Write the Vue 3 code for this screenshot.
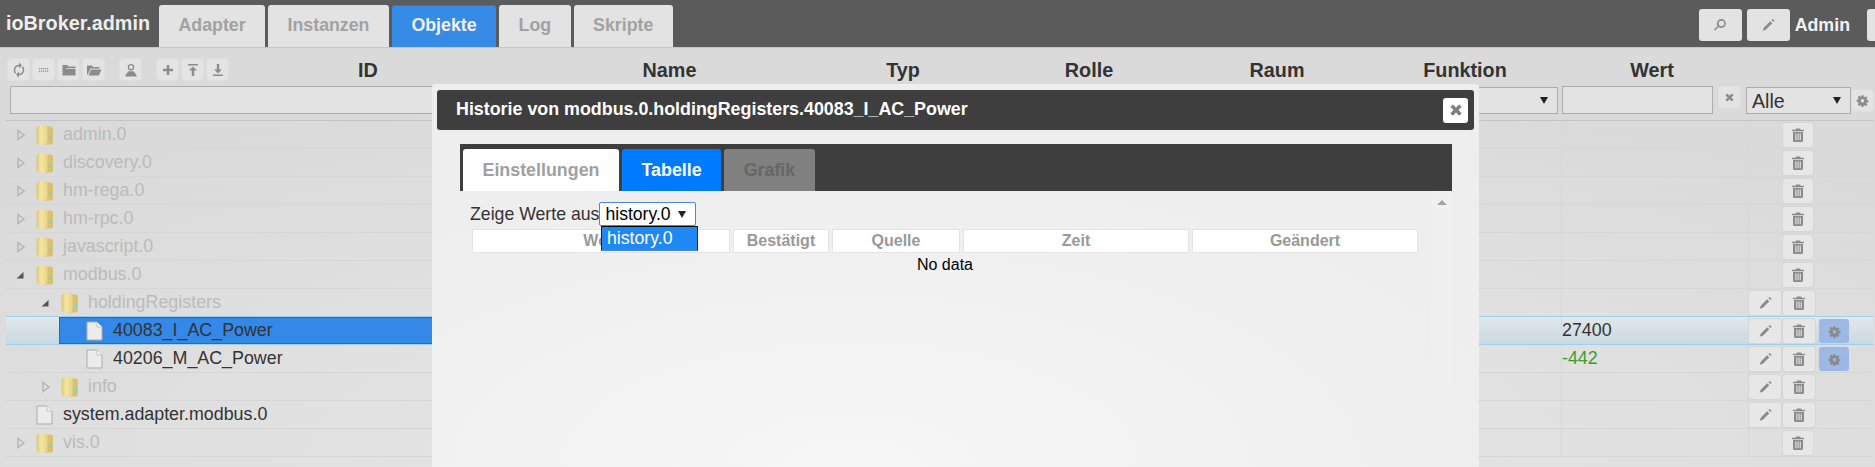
<template>
  <div class="page">
    <div class="topbar">
      <span class="brand">ioBroker.admin</span>
      <div class="tabs">
        <div v-for="t in mainTabs" :key="t" class="tab" :class="{ active: t === 'Objekte' }">{{ t }}</div>
      </div>
      <div class="topright">
        <button class="topbtn"><svg viewBox="0 0 16 16"><path :d="icons.search" /></svg></button>
        <button class="topbtn"><svg viewBox="0 0 16 16"><path :d="icons.pencil" /></svg></button>
        <span class="admin">Admin</span>
        <button class="topbtn last"></button>
      </div>
    </div>

    <div class="content">
      <div class="headrow">
        <div class="tools">
          <button v-for="b in toolButtons" :key="b" class="tool" :class="b">
            <svg viewBox="0 0 16 16"><path :d="icons[b]" fill-rule="evenodd" /></svg>
          </button>
        </div>
        <div v-for="c in columns" :key="c" class="colname">{{ c }}</div>
      </div>

      <div class="filters">
        <input class="filter grow" type="text">
        <select class="filter fn"><option></option></select>
        <input class="filter val" type="text">
        <button class="tool clear"><svg viewBox="0 0 16 16"><path :d="icons.close" /></svg></button>
        <select class="filter ack"><option>Alle</option></select>
        <button class="tool gear"><svg viewBox="0 0 16 16"><path :d="icons.gear" fill-rule="evenodd" /></svg></button>
      </div>

      <div class="rows">
        <div v-for="r in rows" :key="r.name" class="row" :class="{ selected: r.selected }">
          <div class="namecell">
            <span class="indent" :style="{ width: 3 + r.level * 25 + 'px' }"></span>
            <div class="nameinner">
              <span class="arrow">
                <svg v-if="r.open === false" viewBox="0 0 10 12"><path d="M3 1.500 L9 6 L3 10.500 Z" fill="none" stroke="#b4b4b4" stroke-width="1.400" /></svg>
                <svg v-else-if="r.open" viewBox="0 0 10 12"><path d="M8.500 3 V9.500 H1.500 Z" fill="#555" /></svg>
              </span>
              <svg v-if="r.folder" class="nodeicon" viewBox="0 0 17 20">
                <defs>
                  <linearGradient id="fold" x1="0" x2="1" y1="0" y2="0">
                    <stop offset="0" stop-color="#dcc676" />
                    <stop offset="0.4" stop-color="#f3e6a4" />
                    <stop offset="1" stop-color="#e8d585" />
                  </linearGradient>
                </defs>
                <rect x="6" y="1.500" width="11" height="18" rx="2.500" fill="#d8c26f" />
                <rect x="13" y="11" width="2.500" height="3.500" fill="#93cbc6" />
                <rect x="0.500" y="0.500" width="11" height="19" rx="3" fill="url(#fold)" />
              </svg>
              <svg v-else class="nodeicon" viewBox="0 0 17 20">
                <path d="M1 1 H11 L16 6 V19 H1 Z" fill="#ececec" stroke="#adadad" />
                <path d="M11 1 V6 H16" fill="#f6f6f6" stroke="#c4c4c4" />
              </svg>
              <span class="label" :class="{ faded: r.folder }">{{ r.name }}</span>
            </div>
          </div>
          <div></div>
          <div class="valcell" :class="{ neg: r.value < 0 }">{{ r.value }}</div>
          <div class="actions">
            <button v-if="r.edit" class="act"><svg viewBox="0 0 16 16"><path :d="icons.pencil" /></svg></button>
            <button class="act" :class="{ solo: !r.edit }"><svg viewBox="0 0 16 16"><path :d="icons.trash" fill-rule="evenodd" /></svg></button>
            <button v-if="r.history" class="act hist"><svg viewBox="0 0 16 16"><path :d="icons.gear" fill-rule="evenodd" /></svg></button>
          </div>
        </div>
      </div>
    </div>

    <div class="modal">
      <div class="modaltitle">
        <span class="titletext">Historie von modbus.0.holdingRegisters.40083_I_AC_Power</span>
        <button class="closebtn"><svg viewBox="0 0 16 16"><path :d="icons.close" /></svg></button>
      </div>
      <div class="modaltabs">
        <div class="mtab first">Einstellungen</div>
        <div class="mtab current">Tabelle</div>
        <div class="mtab off">Grafik</div>
      </div>
      <div class="pane">
        <div class="paneinner">
          <div class="source">
            <span>Zeige Werte aus</span>
            <select class="instance"><option>history.0</option></select>
            <div class="dropdown">history.0</div>
          </div>
          <div class="thead">
            <div v-for="h in historyCols" :key="h" class="th">{{ h }}</div>
          </div>
          <div class="nodata">No data</div>
        </div>
        <div class="scroll"><span class="scrollup"></span></div>
      </div>
    </div>
  </div>
</template>

<script setup>
const mainTabs = ['Adapter', 'Instanzen', 'Objekte', 'Log', 'Skripte']
const columns = ['ID', 'Name', 'Typ', 'Rolle', 'Raum', 'Funktion', 'Wert']
const historyCols = ['Wert', 'Bestätigt', 'Quelle', 'Zeit', 'Geändert']
const toolButtons = ['refresh', 'dots', 'folder', 'folderOpen', 'person', 'plus', 'upload', 'download']

const rows = [
  { name: 'admin.0', level: 0, folder: true, open: false },
  { name: 'discovery.0', level: 0, folder: true, open: false },
  { name: 'hm-rega.0', level: 0, folder: true, open: false },
  { name: 'hm-rpc.0', level: 0, folder: true, open: false },
  { name: 'javascript.0', level: 0, folder: true, open: false },
  { name: 'modbus.0', level: 0, folder: true, open: true },
  { name: 'holdingRegisters', level: 1, folder: true, open: true, edit: true },
  { name: '40083_I_AC_Power', level: 2, value: 27400, edit: true, history: true, selected: true },
  { name: '40206_M_AC_Power', level: 2, value: -442, edit: true, history: true },
  { name: 'info', level: 1, folder: true, open: false, edit: true },
  { name: 'system.adapter.modbus.0', level: 0, edit: true },
  { name: 'vis.0', level: 0, folder: true, open: false }
]

const icons = {
  search: 'M9.500 2a4.500 4.500 0 1 1-3 7.900L3.200 13.600 2 12.400l3.600-3.400A4.500 4.500 0 0 1 9.500 2zm0 1.700a2.800 2.800 0 1 0 0 5.600 2.800 2.800 0 0 0 0-5.600z',
  pencil: 'M10.200 4.200L12.300 6.300 5.800 12.800 2.700 13.800 3.700 10.700zM11.400 3L12.700 1.900 14.600 3.800 13.500 5.100z',
  close: 'M3 5.200L5.200 3 8 5.800 10.800 3 13 5.200 10.200 8 13 10.800 10.800 13 8 10.200 5.200 13 3 10.800 5.800 8 3 5.200z',
  gear: 'M6.800 1.500h2.400l.3 1.900 1.200.5 1.600-1.100 1.700 1.700-1.100 1.600.5 1.200 1.900.3v2.400l-1.900.3-.5 1.200 1.100 1.600-1.700 1.700-1.600-1.100-1.200.5-.3 1.900H6.800l-.3-1.900-1.200-.5-1.600 1.100L2 12.600l1.100-1.600-.5-1.200-1.900-.3V7.100l1.900-.3.5-1.200L2 4l1.700-1.700 1.600 1.100 1.200-.5zM8 6.200a2.200 2.200 0 1 0 0 4.400 2.200 2.200 0 0 0 0-4.400z',
  trash: 'M6 1.500h4l.6 1.300H14v1.400H2V2.800h3.400zM3 5h10v8.500c0 .8-.6 1.500-1.500 1.500h-7C3.600 15 3 14.300 3 13.500zM5.300 6.500v6.800h1.100V6.500zM7.500 6.500v6.800h1.100V6.500zM9.700 6.500v6.800h1.100V6.500z',
  refresh: 'M8 2.800V.6L11 3.400 8 6.200V4.200A3.800 3.800 0 0 0 5.200 10.600L4.200 11.700A5.300 5.300 0 0 1 8 2.800zM11.800 4.300A5.300 5.300 0 0 1 8 13.200v2.200L5 12.600 8 9.800V11.800A3.800 3.800 0 0 0 10.800 5.400z',
  dots: 'M3 6h1.200v1.200H3zM5 6h1.200v1.200H5zM7 6h1.200v1.200H7zM9 6h1.200v1.200H9zM11 6h1.200v1.200H11zM3 8.500h1.200v1.200H3zM5 8.500h1.200v1.200H5zM7 8.500h1.200v1.200H7zM9 8.500h1.200v1.200H9zM11 8.500h1.200v1.200H11z',
  folder: 'M1.500 3h5l1 1.500h7V6h-9.500v.8h9.500V13.500h-13z',
  folderOpen: 'M1 3.500h5l1 1.500h6.500v1.500H4.500L1.800 12.500H1zM5 7.500h10.500L12.800 13.500H2.500z',
  person: 'M8 2a3.200 3.200 0 1 1 0 6.400A3.200 3.200 0 0 1 8 2zm0 1.300a1.900 1.900 0 1 0 0 3.800 1.900 1.900 0 0 0 0-3.800zM5.500 9.200h5L13.500 13v1.500h-11V13z',
  plus: 'M6.800 3h2.400v3.800H13v2.400H9.200V13H6.800V9.200H3V6.800h3.800z',
  upload: 'M3 2h10v1.400H3zM8 4.500l4 4H9.200V14H6.800V8.500H4z',
  download: 'M6.800 2h2.400v5.500H12l-4 4-4-4h2.800zM3 12.600h10V14H3z'
}
</script>

<style scoped>
.page {
  position: relative;
  width: 1875px;
  height: 467px;
  overflow: hidden;
  font-family: "Liberation Sans", Arial, sans-serif;
  background: radial-gradient(ellipse 1300px 400px at 50% 100%, #e8e8e8, #dadada);
}

button {
  border: 0;
  padding: 0;
  display: flex;
  align-items: center;
  justify-content: center;
}

svg {
  display: block;
}

.topbar {
  height: 47px;
  display: flex;
  background: #5b5b5b;
  border-bottom: 1px solid #c6c6c6;
}

.brand {
  width: 153px;
  padding-left: 6px;
  font-size: 19.8px;
  font-weight: bold;
  line-height: 47px;
  color: #eeeeee;
}

.tabs {
  display: flex;
  gap: 3px;
  padding-top: 5px;
}

.tab {
  padding: 0 19.5px;
  font-size: 17.75px;
  font-weight: bold;
  line-height: 41px;
  color: #a2a2a2;
  background: #e3e3e3;
  border-radius: 3px 3px 0 0;
}

.tab.active {
  color: #f2f2f2;
  background: #368be6;
  box-shadow: inset 0 1px 0 #2f6fe0;
}

.topright {
  margin-left: auto;
  display: flex;
  gap: 5px;
  padding-top: 9px;
  margin-right: -35px;
}

.topbtn {
  width: 43px;
  height: 32px;
  background: #e3e3e3;
  border-radius: 3px;
}

.topbtn svg {
  width: 16px;
  height: 16px;
  fill: #8c8c8c;
}

.topbtn.last {
  margin-left: 12px;
}

.admin {
  font-size: 17.8px;
  font-weight: bold;
  line-height: 32px;
  color: #f2f2f2;
}

.content {
  padding: 0 2px 0 6px;
}

.headrow {
  display: grid;
  grid-template-columns: 222px 280px 323px 144px 228px 148px 228px 146px;
  height: 38px;
}

.tools {
  display: flex;
  gap: 4px;
  padding: 11px 0 0 2px;
}

.tool {
  width: 21px;
  height: 21px;
  background: #e4e4e4;
  border-radius: 3px;
  box-shadow: 0 0 0 1px #dedede;
}

.tool svg {
  width: 16px;
  height: 16px;
  fill: #8c8c8c;
}

.tool.person,
.tool.plus {
  margin-left: 12px;
}

.colname {
  font-size: 19.8px;
  font-weight: bold;
  line-height: 44px;
  text-align: center;
  color: #333333;
}

.filters {
  display: flex;
  height: 35px;
  padding: 0 0 7px 4px;
  border-bottom: 1px solid #c4c4c4;
  align-items: flex-start;
  box-sizing: border-box;
}

.filter {
  box-sizing: border-box;
  height: 28px;
  border: 1px solid #adadad;
  background-color: #e3e3e3;
  color: #333333;
  font-family: inherit;
  font-size: 19.6px;
}

select.filter,
.instance {
  appearance: none;
  padding: 0 0 0 5px;
  background-image: url("data:image/svg+xml,%3Csvg xmlns='http://www.w3.org/2000/svg' width='8' height='7'%3E%3Cpath d='M0 0H8L4 7Z' fill='%23222'/%3E%3C/svg%3E");
  background-repeat: no-repeat;
  background-position: right 9px center;
}

.grow {
  flex: 1;
}

.fn {
  width: 190px;
  margin-left: 3px;
  margin-top: 1px;
  height: 27px;
}

.val {
  width: 151px;
  margin-left: 4px;
}

.clear {
  margin: 1px 6px 0;
}

.clear svg,
.gear svg {
  width: 13px;
  height: 13px;
}

.ack {
  width: 105px;
  height: 27px;
  margin-top: 1px;
}

.gear {
  margin: 4px 0 0 1px;
}

.rows {
  display: flex;
  flex-direction: column;
}

.row {
  display: grid;
  grid-template-columns: 700px 1fr 187px 125px;
  height: 28px;
  box-sizing: border-box;
  border-bottom: 1px solid #d6d6d6;
}

.row.selected {
  background: linear-gradient(#e2e8eb, #c8d8e2);
  border-bottom-color: #9dd0ec;
  box-shadow: 0 -1px 0 #9dd0ec;
}

.namecell {
  display: flex;
  min-width: 0;
}

.nameinner {
  flex: 1;
  display: flex;
  align-items: center;
  padding-left: 6px;
}

.selected .nameinner {
  background: #3388e8;
  box-shadow: inset 0 0 0 1px #2a5fe8;
}

.arrow {
  width: 10px;
  height: 12px;
  margin-right: 11px;
}

.nodeicon {
  width: 17px;
  height: 20px;
  margin-right: 10px;
}

.label,
.valcell {
  font-size: 17.85px;
  color: #333333;
}

.label.faded {
  color: #bbbbbb;
}

.valcell {
  line-height: 27px;
  border-left: 1px solid #d8d8d8;
}

.valcell.neg {
  color: #3a9c2e;
}

.actions {
  display: flex;
  gap: 2px;
  padding-top: 2px;
  border-left: 1px solid #d8d8d8;
}

.act {
  width: 32px;
  height: 24px;
  background: #e7e7e7;
  border-radius: 3px;
  box-shadow: 0 0 0 1px #d6d6d6;
}

.act.solo {
  width: 30px;
  margin-left: 34px;
}

.act svg {
  width: 16px;
  height: 16px;
  fill: #8a8a8a;
}

.act.hist {
  width: 30px;
  margin-left: 2px;
  background: #9db8e4;
  box-shadow: none;
}

.act.hist svg {
  width: 13px;
  height: 13px;
}

.modal {
  position: absolute;
  left: 432px;
  top: 84px;
  bottom: 0;
  width: 1047px;
  padding: 6px 5px 0;
  box-sizing: border-box;
  border-radius: 3px 3px 0 0;
  background: radial-gradient(ellipse 700px 300px at 40% 100%, #f6f6f6, #eeeeee);
}

.modaltitle {
  height: 40px;
  padding: 0 6px 0 19px;
  display: flex;
  align-items: center;
  justify-content: space-between;
  background: #3e3e3e;
  border-radius: 3px;
  color: #ffffff;
  font-size: 17.85px;
  font-weight: bold;
}

.titletext {
  padding-bottom: 2px;
}

.closebtn {
  width: 25px;
  height: 25px;
  background: #ffffff;
  border-radius: 3px;
}

.closebtn svg {
  width: 18px;
  height: 18px;
  fill: #7e7e7e;
}

.modaltabs {
  margin: 14px 22px 0 23px;
  padding: 5px 0 0 3px;
  height: 47px;
  box-sizing: border-box;
  display: flex;
  gap: 3px;
  background: #3e3e3e;
}

.mtab {
  padding: 0 19.5px;
  font-size: 17.85px;
  font-weight: bold;
  line-height: 42px;
  border-radius: 3px 3px 0 0;
}

.mtab.first {
  color: #a0a0a0;
  background: #ffffff;
}

.mtab.current {
  color: #ffffff;
  background: #007bff;
}

.mtab.off {
  color: #666666;
  background: #808080;
}

.pane {
  margin: 0 22px 0 23px;
  display: flex;
  justify-content: space-between;
}

.paneinner {
  width: 971px;
}

.source {
  position: relative;
  display: flex;
  align-items: center;
  height: 24px;
  margin: 11px 0 3px 10px;
  font-size: 17.7px;
  color: #333333;
}

.instance {
  width: 97px;
  height: 24px;
  margin-left: 0;
  box-sizing: border-box;
  border: 1px solid #4a86e0;
  border-radius: 2px;
  background-color: #ffffff;
  color: #000000;
  font-family: inherit;
  font-size: 17.6px;
}

.dropdown {
  position: absolute;
  left: 131px;
  top: 24px;
  width: 97px;
  height: 25px;
  box-sizing: border-box;
  padding-left: 5px;
  line-height: 22px;
  color: #ffffff;
  background: #1e88f5;
  border: 1px solid #222222;
  border-top-color: #000000;
  border-bottom-color: #4a86e0;
  z-index: 2;
}

.thead {
  display: grid;
  grid-template-columns: 258px 96px 128px 226px 226px;
  gap: 3px;
  margin-left: 12px;
}

.th {
  height: 24px;
  box-sizing: border-box;
  border: 1px solid #e4e4e4;
  background: #ffffff;
  color: #999999;
  font-size: 16px;
  font-weight: bold;
  line-height: 22px;
  text-align: center;
}

.nodata {
  margin-left: 12px;
  width: 946px;
  text-align: center;
  font-size: 16px;
  line-height: 24px;
  color: #000000;
}

.scroll {
  width: 21px;
  height: 280px;
  display: flex;
  justify-content: center;
  padding-top: 9px;
  box-sizing: border-box;
  background: #f0f0f0;
}

.scrollup {
  width: 0;
  height: 0;
  border-left: 5px solid transparent;
  border-right: 5px solid transparent;
  border-bottom: 5px solid #a3a3a3;
}
</style>

<style>
html, body {
  margin: 0;
  overflow: hidden;
}
</style>
